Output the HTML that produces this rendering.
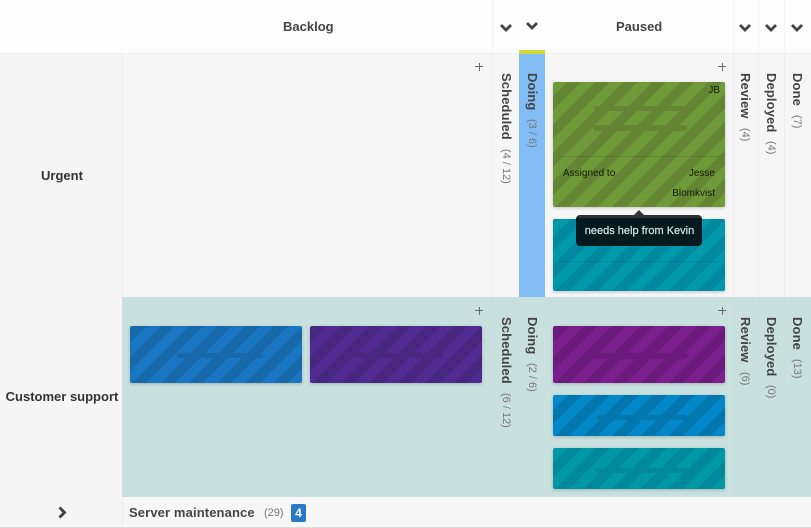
<!DOCTYPE html>
<html><head><meta charset="utf-8"><style>
html,body{margin:0;padding:0;width:811px;height:528px;overflow:hidden;background:#fff}
body{position:relative;font-family:"Liberation Sans",sans-serif;color:#444}
.a{position:absolute}
.b{position:absolute;box-sizing:border-box}
.card{position:absolute;border-radius:2px;width:172px;box-shadow:0 1px 3px rgba(0,0,0,.2);background-image:repeating-linear-gradient(-45deg,var(--l) 0,var(--l) 10px,var(--d) 10px,var(--d) 20px)}
.bar{position:absolute;height:6px;border-radius:3px;background:var(--d)}
.v{position:absolute;writing-mode:vertical-rl;font-weight:bold;font-size:13px;line-height:15px;white-space:nowrap;color:#444;letter-spacing:.12px}
.v span{font-weight:normal;font-size:11px;color:#777;margin-top:9px;display:inline-block;letter-spacing:0}
.plus{position:absolute;width:9px;height:9px;background:linear-gradient(#6a6a6a,#6a6a6a) 0 4px/8px 1px no-repeat,linear-gradient(#6a6a6a,#6a6a6a) 4px 1px/1px 8px no-repeat}
.hd{position:absolute;top:19px;font-weight:bold;font-size:13px;line-height:16px;color:#444}
.ch{position:absolute;width:14px;height:9px}
.lbl{position:absolute;font-weight:bold;font-size:13px;line-height:15px;color:#333;text-align:center}
.t{position:absolute;font-size:10px;line-height:13px;color:#111a06;white-space:nowrap}
</style></head><body>
<div class="b" style="left:0;top:0;width:811px;height:54px;background:#fdfdfd;border-bottom:1px solid #efefef"></div>
<div class="b" style="left:0;top:54px;width:122px;height:474px;background:#f5f5f5"></div>
<div class="b" style="left:122px;top:54px;width:689px;height:243px;background:#f6f6f6"></div>
<div class="b" style="left:122px;top:54px;width:1px;height:243px;background:#eeeeee"></div>
<div class="b" style="left:122px;top:297px;width:689px;height:200px;background:#c8e0de"></div>
<div class="b" style="left:122px;top:497px;width:689px;height:30px;background:#f7f7f7;border-left:1px solid #ececec"></div>
<div class="b" style="left:0;top:527px;width:811px;height:1px;background:#ddd"></div>

<div class="b" style="left:492px;top:0;width:1px;height:54px;background:#f5f5f5"></div>
<div class="b" style="left:733px;top:0;width:1px;height:54px;background:#f5f5f5"></div>
<div class="b" style="left:758px;top:0;width:1px;height:54px;background:#f5f5f5"></div>
<div class="b" style="left:784px;top:0;width:1px;height:54px;background:#f5f5f5"></div>
<div class="b" style="left:492px;top:54px;width:1px;height:243px;background:#eeeeee"></div>
<div class="b" style="left:733px;top:54px;width:1px;height:243px;background:#eeeeee"></div>
<div class="b" style="left:758px;top:54px;width:1px;height:243px;background:#eeeeee"></div>
<div class="b" style="left:784px;top:54px;width:1px;height:243px;background:#eeeeee"></div>
<div class="b" style="left:492px;top:297px;width:1px;height:200px;background:#c5dddb"></div>
<div class="b" style="left:733px;top:297px;width:1px;height:200px;background:#c5dddb"></div>
<div class="b" style="left:758px;top:297px;width:1px;height:200px;background:#c5dddb"></div>
<div class="b" style="left:784px;top:297px;width:1px;height:200px;background:#c5dddb"></div>

<div class="b" style="left:519px;top:50px;width:26px;height:4px;background:#cddc39"></div>
<div class="b" style="left:519px;top:54px;width:26px;height:243px;background:#82bef5"></div>

<div class="hd" style="left:283px">Backlog</div>
<div class="hd" style="left:616px">Paused</div>
<svg class="ch" style="left:499px;top:23px" viewBox="0 0 14 9"><path d="M2 2l5 5 5-5" fill="none" stroke="#444" stroke-width="2.8"/></svg>
<svg class="ch" style="left:525px;top:21px" viewBox="0 0 14 9"><path d="M2 2l5 5 5-5" fill="none" stroke="#444" stroke-width="2.8"/></svg>
<svg class="ch" style="left:738px;top:23px" viewBox="0 0 14 9"><path d="M2 2l5 5 5-5" fill="none" stroke="#444" stroke-width="2.8"/></svg>
<svg class="ch" style="left:764px;top:23px" viewBox="0 0 14 9"><path d="M2 2l5 5 5-5" fill="none" stroke="#444" stroke-width="2.8"/></svg>
<svg class="ch" style="left:790px;top:23px" viewBox="0 0 14 9"><path d="M2 2l5 5 5-5" fill="none" stroke="#444" stroke-width="2.8"/></svg>

<div class="lbl" style="left:1px;width:122px;top:168px">Urgent</div>
<div class="lbl" style="left:1px;width:122px;top:389px;white-space:nowrap">Customer support</div>

<div class="plus" style="left:475px;top:62px"></div>
<div class="plus" style="left:718px;top:62px"></div>
<div class="plus" style="left:475px;top:306px"></div>
<div class="plus" style="left:718px;top:306px"></div>

<div class="v" style="left:498px;top:73px">Scheduled<span>(4 / 12)</span></div>
<div class="v" style="left:524px;top:73px">Doing<span>(3 / 6)</span></div>
<div class="v" style="left:737px;top:73px">Review<span>(4)</span></div>
<div class="v" style="left:763px;top:73px">Deployed<span>(4)</span></div>
<div class="v" style="left:789px;top:73px">Done<span>(7)</span></div>
<div class="v" style="left:498px;top:317px">Scheduled<span>(6 / 12)</span></div>
<div class="v" style="left:524px;top:317px">Doing<span>(2 / 6)</span></div>
<div class="v" style="left:737px;top:317px">Review<span>(6)</span></div>
<div class="v" style="left:763px;top:317px">Deployed<span>(0)</span></div>
<div class="v" style="left:789px;top:317px">Done<span>(13)</span></div>

<!-- Green card -->
<div class="card" style="left:553px;top:82px;height:125px;--l:#6e9b38;--d:#648634">
  <div class="bar" style="left:41px;top:24px;width:92px;height:5px"></div>
  <div class="bar" style="left:40px;top:43px;width:94px"></div>
  <div class="a" style="left:5px;top:74px;width:162px;height:1px;background:rgba(0,0,0,.1)"></div>
  <div class="t" style="right:5px;top:2px">JB</div>
  <div class="t" style="left:10px;top:85px">Assigned to</div>
  <div class="t" style="right:10px;top:85px">Jesse</div>
  <div class="t" style="right:10px;top:105px">Blomkvist</div>
</div>
<!-- Teal card -->
<div class="card" style="left:553px;top:219px;height:72px;--l:#0098ab;--d:#0089a0">
  <div class="a" style="left:5px;top:42px;width:162px;height:1px;background:rgba(0,0,0,.1)"></div>
</div>
<!-- Tooltip -->
<div class="a" style="left:634px;top:210px;width:0;height:0;border-left:5px solid transparent;border-right:5px solid transparent;border-bottom:5px solid #333"></div>
<div class="a" style="left:576px;top:215px;width:126px;height:31px;border-radius:4px;background:#06191f;border-top:3px solid #2f3132;box-sizing:border-box;color:#d5e6ea;font-size:11px;line-height:26px;text-align:center;white-space:nowrap;padding-left:1px;-webkit-text-stroke:.2px #d5e6ea">needs help from Kevin</div>

<!-- Row 2 cards -->
<div class="card" style="left:130px;top:326px;height:57px;--l:#1976c2;--d:#1769aa">
  <div class="bar" style="left:47px;top:27px;width:86px;height:5px"></div>
</div>
<div class="card" style="left:310px;top:326px;height:57px;--l:#512a92;--d:#472780">
  <div class="bar" style="left:40px;top:27px;width:93px;height:5px"></div>
</div>
<div class="card" style="left:553px;top:326px;height:57px;--l:#7b1f8f;--d:#6a1b7c">
  <div class="bar" style="left:41px;top:27px;width:94px"></div>
</div>
<div class="card" style="left:553px;top:395px;height:41px;--l:#0288c8;--d:#0277ae">
  <div class="bar" style="left:43px;top:20px;width:92px;height:5px"></div>
</div>
<div class="card" style="left:553px;top:448px;height:41px;--l:#0097a7;--d:#00889b">
  <div class="bar" style="left:42px;top:20px;width:93px;height:5px"></div>
</div>

<!-- Bottom row -->
<svg class="a" style="left:57px;top:506px" width="11" height="13" viewBox="0 0 11 13"><path d="M2.5 1.5l5 5-5 5" fill="none" stroke="#444" stroke-width="2.9"/></svg>
<div class="a" style="left:129px;top:505px;font-weight:bold;font-size:13px;line-height:15px;color:#444;white-space:nowrap;letter-spacing:.12px">Server maintenance</div>
<div class="a" style="left:264px;top:507px;font-size:11px;line-height:13px;color:#777">(29)</div>
<div class="a" style="left:291px;top:504px;width:15px;height:18px;border-radius:2px;background:#2a78c8;color:#fff;font-weight:bold;font-size:12px;line-height:18px;text-align:center">4</div>
</body></html>
